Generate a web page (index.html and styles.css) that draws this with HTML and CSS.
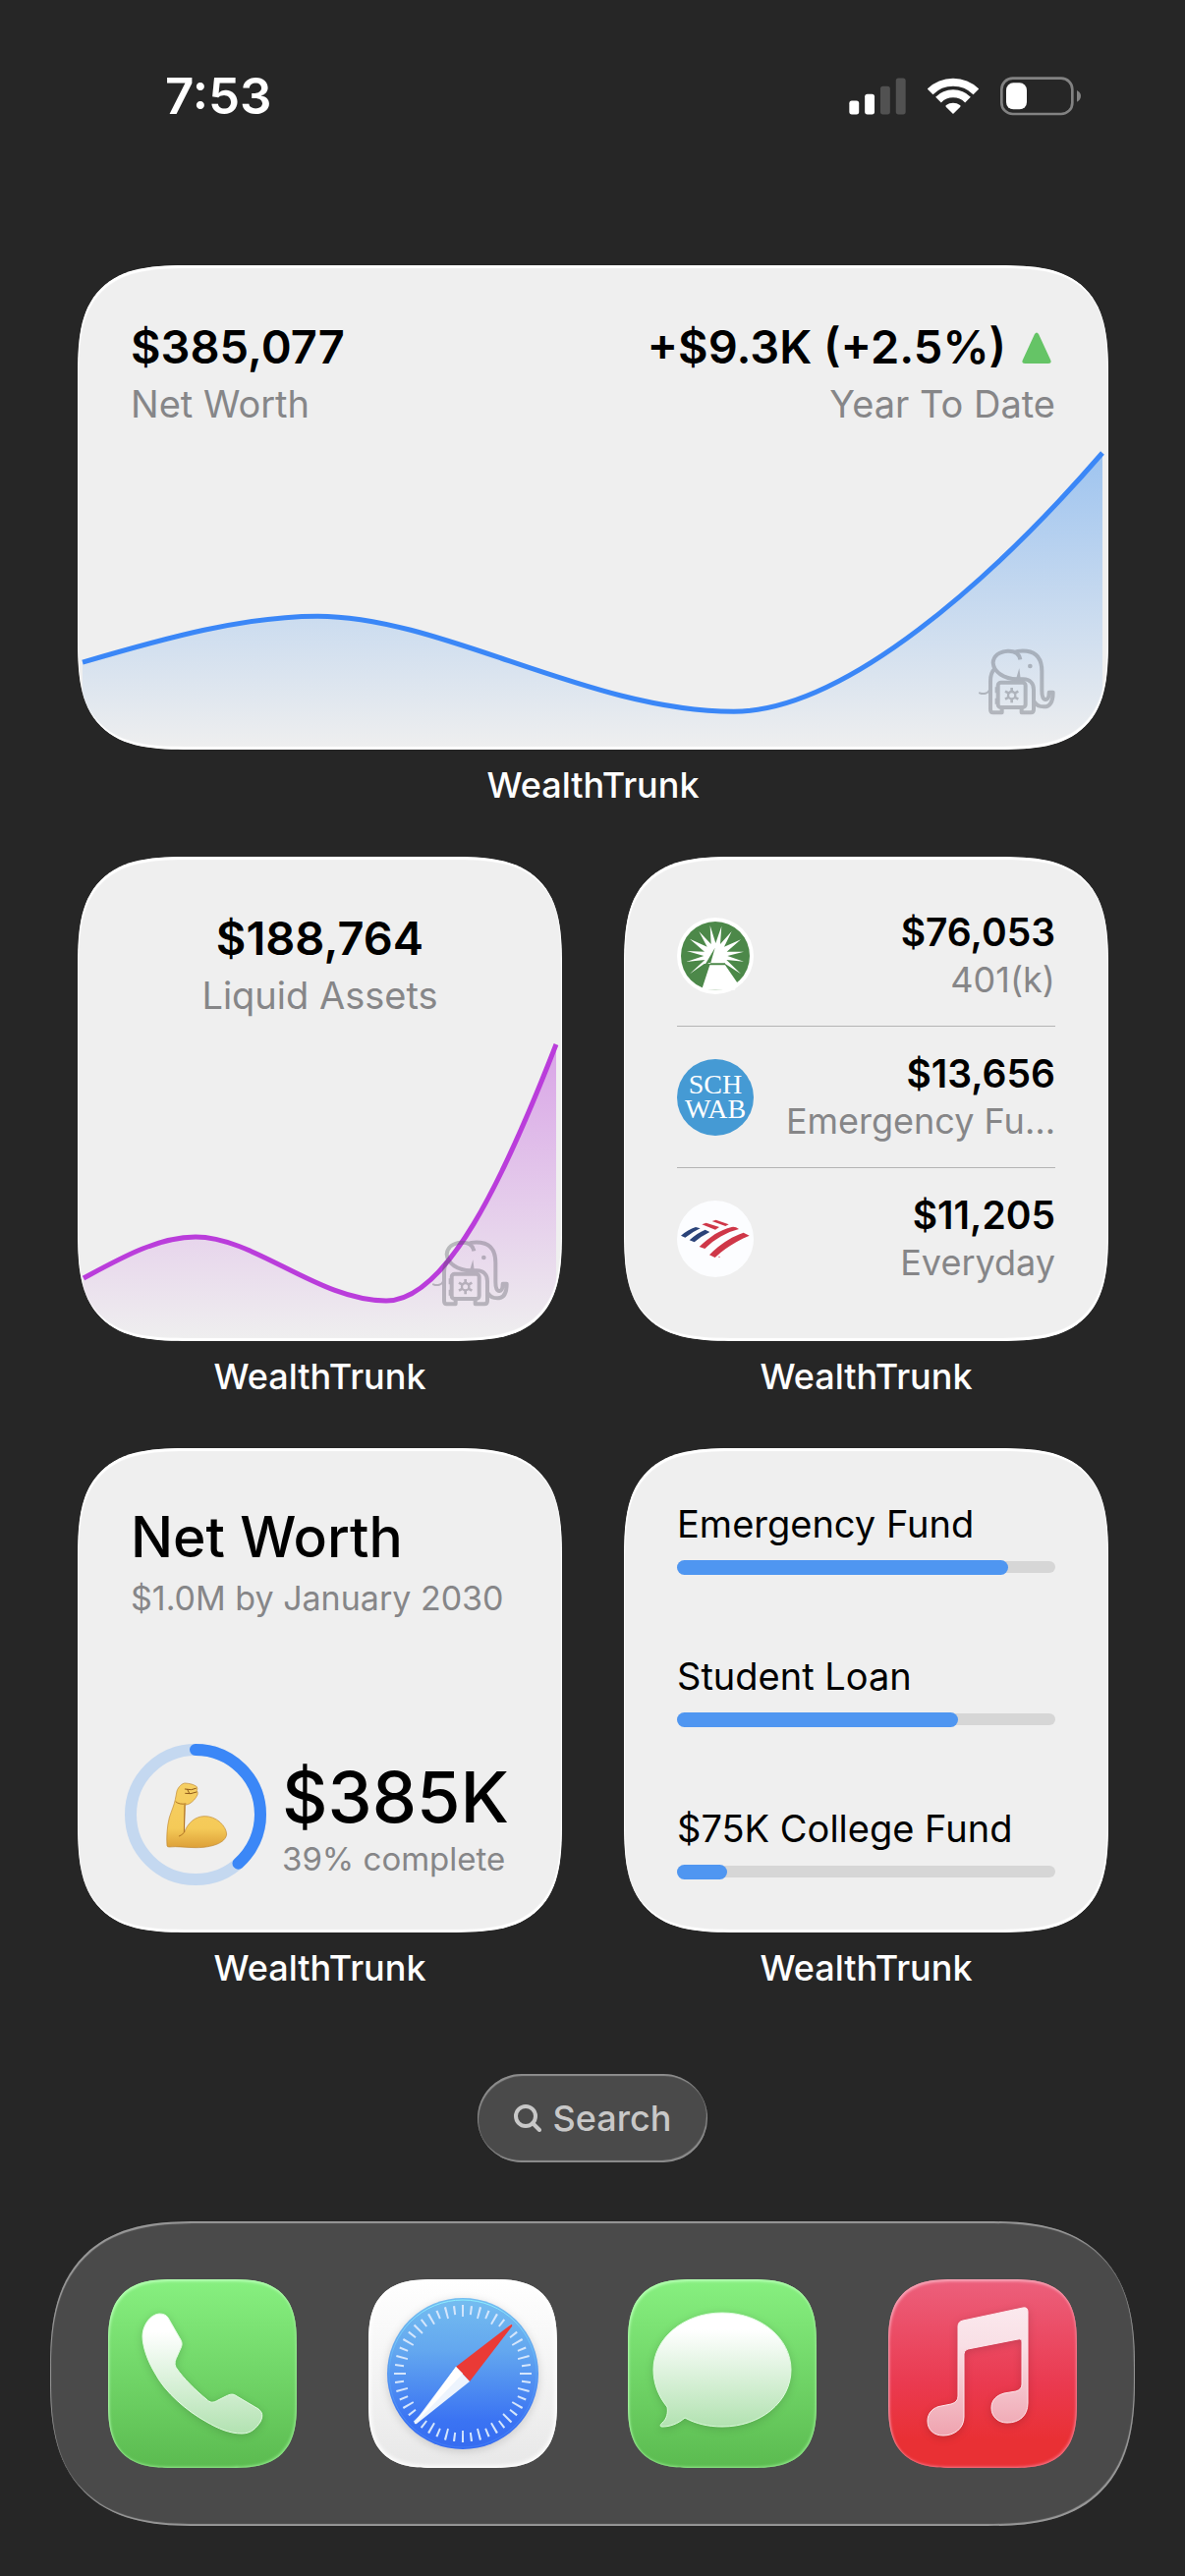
FILE: index.html
```html
<!DOCTYPE html>
<html lang="en">
<head>
    <meta charset="UTF-8">
    <meta name="viewport" content="width=device-width, initial-scale=1.0">
    <title>WealthTrunk Widgets</title>
    <link rel="stylesheet" href="styles.css">
</head>
<body>
    <!-- shared artwork -->
    <svg class="defs" width="0" height="0" aria-hidden="true">
        <symbol id="elephant" viewBox="76 58 240 208">
            <g fill="none" stroke="currentColor" stroke-width="12" stroke-linejoin="round">
                <path d="M206 94C203 77 189 67 168 68C141 69 124 84 123 104C125 133 158 153 196 154H215C236 154 247 167 247 186V246Q247 256 238 256H210V242"/>
                <path d="M186 72C200 66 214 67 226 68C259 72 272 97 272 130V188C272 207 276 217 284 216C292 215 294 206 294 194H306C306 222 296 238 278 238C263 238 253 231 249 222"/>
                <path d="M128 122C117 132 115 144 115 160V246Q115 256 123 256H150V242"/>
                <rect x="138" y="164" width="84" height="76" rx="9"/>
                <path stroke-width="6" stroke-linecap="round" d="M82 196C94 201 108 198 113 186"/>
                <path stroke-width="8" d="M133 178v18M133 212v18"/>
                <circle cx="180" cy="203" r="11" stroke-width="7"/>
                <path stroke-width="8" d="M180 192v-12M180 214v12M189 197l11-6M171 209l-11 6M171 197l-11-6M189 209l11 6"/>
            </g>
            <circle cx="236" cy="114" r="7" fill="currentColor"/>
            <path d="M203 120L194 150L207 152Z" fill="currentColor"/>
        </symbol>
    </svg>

    <header class="status-bar">
        <span class="time">7:53</span>
        <div class="status-icons">
            <svg width="58" height="38" viewBox="44 40 176 114" aria-label="Signal">
                <rect x="45" y="111" width="30" height="42" rx="8" fill="#fff"/>
                <rect x="93" y="90" width="30" height="63" rx="8" fill="#fff"/>
                <rect x="141" y="66" width="30" height="87" rx="8" fill="#515151"/>
                <rect x="189" y="41" width="30" height="112" rx="8" fill="#515151"/>
            </svg>
            <svg width="52" height="38" viewBox="284 40 156 114" aria-label="Wi-Fi">
                <path d="M292 83A99.500 99.500 0 0 1 432 83M317 108A63 63 0 0 1 407 108" fill="none" stroke="#fff" stroke-width="24"/>
                <path d="M362 151L340 129Q338 126 341 124A36 36 0 0 1 383 124Q386 126 384 129Z" fill="#fff"/>
            </svg>
            <svg width="82" height="40" viewBox="504 38 246 120" aria-label="Battery">
                <rect x="508" y="43" width="216" height="109" rx="34" fill="none" stroke="#828282" stroke-width="8"/>
                <rect x="522" y="57" width="63" height="81" rx="22" fill="#fff"/>
                <path d="M738 80C746 84 750 91 750 97C750 104 746 111 738 115Z" fill="#828282"/>
            </svg>
        </div>
    </header>

    <main class="widgets">
        <figure class="wide">
            <section class="widget widget-wide">
                <div class="totals">
                    <div>
                        <h2 class="amount">$385,077</h2>
                        <p class="label">Net Worth</p>
                    </div>
                    <div class="change">
                        <h2 class="amount">+$9.3K (+2.5%)
                            <svg class="up" width="30" height="32" viewBox="0 0 30 32"><path d="M13 2Q15-1 17 2L29 28Q31 32 27 32H3Q-1 32 1 28Z" fill="#65c466"/></svg>
                        </h2>
                        <p class="label">Year To Date</p>
                    </div>
                </div>
                <svg class="chart" viewBox="0 183 1048 310">
                    <defs>
                        <linearGradient id="blueFill" x1="0" y1="0" x2="0" y2="1">
                            <stop offset="0" stop-color="#3b8ff0" stop-opacity="0.45"/>
                            <stop offset="1" stop-color="#3b8ff0" stop-opacity="0"/>
                        </linearGradient>
                    </defs>
                    <path d="M5 404C90 379 170 357 244 357C370 357 520 454 667 454C780 454 930 320 1042 191V493H5Z" fill="url(#blueFill)"/>
                    <path d="M5 404C90 379 170 357 244 357C370 357 520 454 667 454C780 454 930 320 1042 191" fill="none" stroke="#3b87f7" stroke-width="5"/>
                </svg>
                <svg class="elephant"><use href="#elephant"/></svg>
            </section>
            <figcaption>WealthTrunk</figcaption>
        </figure>

        <figure>
            <section class="widget">
                <div class="totals totals-center">
                    <div>
                        <h2 class="amount">$188,764</h2>
                        <p class="label">Liquid Assets</p>
                    </div>
                </div>
                <svg class="chart" viewBox="0 183 493 310">
                    <defs>
                        <linearGradient id="purpleFill" x1="0" y1="0" x2="0" y2="1">
                            <stop offset="0" stop-color="#ba3ddb" stop-opacity="0.42"/>
                            <stop offset="1" stop-color="#ba3ddb" stop-opacity="0"/>
                        </linearGradient>
                    </defs>
                    <path d="M6 429C45 408 82 387 120 387C180 387 245 452 314 452C375 452 433 330 487 191V493H6Z" fill="url(#purpleFill)"/>
                    <path d="M6 429C45 408 82 387 120 387C180 387 245 452 314 452C375 452 433 330 487 191" fill="none" stroke="#ba3ddb" stroke-width="5"/>
                </svg>
                <svg class="elephant"><use href="#elephant"/></svg>
            </section>
            <figcaption>WealthTrunk</figcaption>
        </figure>

        <figure>
            <section class="widget">
                <ul class="accounts">
                    <li>
                        <svg class="bank" viewBox="27 41 234 234" aria-label="Fidelity">
                            <circle cx="144" cy="158" r="117" fill="#fff"/>
                            <circle cx="144" cy="158" r="105" fill="#4c8849"/>
                            <path fill="#fff" d="M66 213L112 170L55 176L109 158L57 143L111 145L66 106L119 130L94 83L131 122L128 65L145 119L163 67L159 122L194 83L171 130L222 108L179 145L231 145L181 158L231 175L178 170L222 213L174 182H110Z"/>
                            <path fill="#4c8849" d="M143 133L112 186H128ZM122 180H174V186H122Z"/>
                            <path fill="#fff" d="M127 186H174L211 240L204 262H96L104 256Z"/>
                        </svg>
                        <div>
                            <strong>$76,053</strong>
                            <span>401(k)</span>
                        </div>
                    </li>
                    <li>
                        <div class="bank schwab">SCH<br>WAB</div>
                        <div>
                            <strong>$13,656</strong>
                            <span>Emergency Fu…</span>
                        </div>
                    </li>
                    <li>
                        <svg class="bank" viewBox="27 903 234 234" aria-label="Bank of America">
                            <circle cx="144" cy="1020" r="117" fill="#fcfdff"/>
                            <g fill="#cf3748">
                                <path d="M95 1044C125 1015 158 992 194 984Q205 982 216 990C178 1000 142 1020 112 1050Z"/>
                                <path d="M126 1069C154 1040 190 1014 230 1001L248 1010C208 1026 174 1048 143 1077Z"/>
                                <path d="M103 976L116 971L156 984L144 992Z"/>
                                <path d="M134 966L146 962L185 976L175 981Z"/>
                                <circle cx="156" cy="1075" r="2"/>
                            </g>
                            <g fill="#2b4379">
                                <path d="M39 1010Q60 992 84 984L98 988Q74 999 52 1016Z"/>
                                <path d="M65 1024Q88 1002 113 992L127 999Q102 1011 80 1030Z"/>
                            </g>
                        </svg>
                        <div>
                            <strong>$11,205</strong>
                            <span>Everyday</span>
                        </div>
                    </li>
                </ul>
            </section>
            <figcaption>WealthTrunk</figcaption>
        </figure>

        <figure>
            <section class="widget goal">
                <div>
                    <h2 class="goal-title">Net Worth</h2>
                    <p class="goal-note">$1.0M by January 2030</p>
                </div>
                <div class="goal-progress">
                    <svg class="ring" viewBox="21 30 432 432" role="img" aria-label="39% complete">
                        <defs>
                            <linearGradient id="skin" x1="0" y1="0" x2="0" y2="1">
                                <stop offset="0" stop-color="#f6cf63"/>
                                <stop offset="0.700" stop-color="#f5ca58"/>
                                <stop offset="1" stop-color="#dda038"/>
                            </linearGradient>
                        </defs>
                        <g fill="none" stroke-width="36">
                            <circle cx="237" cy="246" r="198" stroke="#c4d8f0"/>
                            <circle cx="237" cy="246" r="198" stroke="#3b87f7" stroke-linecap="round" pathLength="1000" stroke-dasharray="385 1000" transform="rotate(-90 237 246)"/>
                        </g>
                        <path d="M150 341C148 316 150 281 157 255C164 233 172 216 175 200L180 174C184 162 196 150 205 150C219 151 233 154 241 161Q244 166 241 173Q245 178 243 185C238 197 228 207 218 213L205 217C205 245 202 272 203 300C213 271 237 251 264 251C301 250 331 281 332 306C329 333 286 347 238 347C208 347 181 342 157 345Q150 345 150 341Z" fill="url(#skin)" stroke="#c08a35" stroke-width="2"/>
                        <path d="M204 216L202 301Q195 309 187 312M177 207Q187 216 207 213" fill="none" stroke="#b07425" stroke-width="3" stroke-linecap="round"/>
                        <path d="M205 168L224 170L238 166M206 181L222 182L240 177M212 169L218 181" fill="none" stroke="#8f5a1a" stroke-width="3" stroke-linecap="round"/>
                    </svg>
                    <div>
                        <div class="goal-value">$385K</div>
                        <div class="goal-percent">39% complete</div>
                    </div>
                </div>
            </section>
            <figcaption>WealthTrunk</figcaption>
        </figure>

        <figure>
            <section class="widget funds">
                <div class="fund">
                    <p>Emergency Fund</p>
                    <div class="track"><div class="fill" style="width: 87.5%"></div></div>
                </div>
                <div class="fund">
                    <p>Student Loan</p>
                    <div class="track"><div class="fill" style="width: 74.3%"></div></div>
                </div>
                <div class="fund">
                    <p>$75K College Fund</p>
                    <div class="track"><div class="fill" style="width: 13.2%"></div></div>
                </div>
            </section>
            <figcaption>WealthTrunk</figcaption>
        </figure>
    </main>

    <button class="search" type="button">
        <svg width="28" height="28" viewBox="0 0 28 28" fill="none" stroke="#c8c8c8" stroke-linecap="round">
            <circle cx="12" cy="12" r="10" stroke-width="4"/>
            <path d="M19 19L26 26" stroke-width="4"/>
        </svg>
        Search
    </button>

    <nav class="dock">
        <a class="app app-green" href="#" aria-label="Phone">
            <svg viewBox="0 0 192 192">
                <defs>
                    <linearGradient id="glass" x1="0" y1="0" x2="0" y2="1">
                        <stop offset="0.150" stop-color="#fff"/>
                        <stop offset="1" stop-color="#b2e2b1"/>
                    </linearGradient>
                </defs>
                <path d="M52 35C42 36 35 48 35 58C35 68 40 83 48 96C58 115 80 134 100 145C112 152 124 157 136 157C146 157 151 151 155 145C158 139 157 135 153 132L131 119C127 116 124 117 120 119L112 123C107 126 104 126 100 122C90 114 76 100 70 91C67 87 68 83 70 79L74 70C76 66 75 63 73 60L61 39C59 36 56 35 52 35Z" fill="url(#glass)" stroke="#e4fbe4" stroke-width="1"/>
            </svg>
        </a>
        <a class="app app-white" href="#" aria-label="Safari">
            <svg viewBox="0 0 192 192">
                <defs>
                    <linearGradient id="compass" x1="0" y1="0" x2="0" y2="1">
                        <stop offset="0" stop-color="#75bdf0"/>
                        <stop offset="0.350" stop-color="#63a7ef"/>
                        <stop offset="0.800" stop-color="#3b74f3"/>
                        <stop offset="1" stop-color="#356bf0"/>
                    </linearGradient>
                    <linearGradient id="rim" x1="0" y1="0" x2="0" y2="1">
                        <stop offset="0" stop-color="#8df0ff"/>
                        <stop offset="0.500" stop-color="#5aa3f5"/>
                        <stop offset="1" stop-color="#3f7af5"/>
                    </linearGradient>
                </defs>
                <circle cx="96" cy="96" r="77" fill="url(#compass)"/>
                <circle cx="96" cy="96" r="75" fill="none" stroke="url(#rim)" stroke-width="1"/>
                <g fill="none" stroke="#d5e6fc">
                    <circle cx="96" cy="96" r="64" stroke-width="12" pathLength="2400" stroke-dasharray="12 88" stroke-dashoffset="6"/>
                    <circle cx="96" cy="96" r="65" stroke-width="9" pathLength="2400" stroke-dasharray="12 88" stroke-dashoffset="56"/>
                </g>
                <path d="M145 46Q147 46 146 48L103 104L89 89Z" fill="#ea3a36"/>
                <path d="M89 89L103 104L49 147Q46 148 47 145Z" fill="#edf4fd"/>
                <path d="M89 89L96 96L48 146Z" fill="#fff"/>
            </svg>
        </a>
        <a class="app app-green" href="#" aria-label="Messages">
            <svg viewBox="0 0 192 192">
                <path d="M96 34C135 34 166 60 166 92C166 125 135 150 96 150C82 150 69 147 58 141C51 147 43 150 35 150C32 150 33 148 35 146C40 142 41 135 40 130C31 119 26 106 26 92C26 60 57 34 96 34Z" fill="url(#glass)" stroke="#dffbdf" stroke-width="1"/>
            </svg>
        </a>
        <a class="app app-red" href="#" aria-label="Music">
            <svg viewBox="0 0 192 192">
                <defs>
                    <linearGradient id="note" x1="0" y1="0" x2="0" y2="1">
                        <stop offset="0" stop-color="#fbe9ee"/>
                        <stop offset="0.300" stop-color="#f9dfe5"/>
                        <stop offset="1" stop-color="#efa3af"/>
                    </linearGradient>
                </defs>
                <path d="M71 48Q71 43 76 42L137 29Q142 28 142 33V126C142 139 133 146 121 146C112 146 105 140 105 131C105 122 111 118 118 116L130 114Q136 112 136 107V64Q136 60 132 61L81 71Q77 72 77 76V140C77 152 67 159 56 159C46 159 40 153 40 144C40 136 46 130 54 129L64 127Q71 125 71 119Z" fill="url(#note)" stroke="#fde8ed" stroke-width="1"/>
            </svg>
        </a>
    </nav>
</body>
</html>
```

FILE: styles.css
```css
* {
    box-sizing: border-box;
}

body {
    margin: 0;
    min-height: 100vh;
    display: flex;
    flex-direction: column;
    background-color: #262626;
    color: white;
    font-family: Inter, "Liberation Sans", sans-serif;
}

h2,
p,
ul,
figure {
    margin: 0;
    padding: 0;
    font-weight: 400;
}

.defs {
    position: absolute;
}

/* Status bar */
.status-bar {
    display: flex;
    justify-content: space-between;
    align-items: center;
    padding: 68px 106px 142px 168px;
}

.time {
    font-size: 51px;
    line-height: 60px;
    font-weight: 600;
}

.status-icons {
    display: flex;
    align-items: center;
    gap: 22px;
}

/* Widgets */
.widgets {
    display: grid;
    grid-template-columns: 1fr 1fr;
    gap: 51px 63px;
    padding: 0 78px 0 79px;
}

.wide {
    grid-column: span 2;
}

figcaption {
    margin-top: 14px;
    text-align: center;
    font-size: 36px;
    line-height: 44px;
    font-weight: 500;
}

.widget {
    position: relative;
    display: flex;
    flex-direction: column;
    aspect-ratio: 1;
    border-radius: 82px;
    overflow: hidden;
    background-color: #efefef;
    color: black;
}

.widget-wide {
    aspect-ratio: 1049 / 493;
}

/* light edge of the glass */
.widget::after {
    content: "";
    position: absolute;
    inset: 0;
    border-radius: 82px;
    box-shadow: inset 1px 3px 1px white, inset -1px -3px 1px white;
    pointer-events: none;
}

.totals {
    display: flex;
    justify-content: space-between;
    padding: 55px 54px 0;
}

.totals-center {
    justify-content: center;
    text-align: center;
}

.change {
    text-align: right;
}

.amount {
    font-size: 47px;
    line-height: 56px;
    font-weight: 600;
}

.up {
    margin-left: 4px;
    margin-right: 4px;
}

.label {
    font-size: 38px;
    line-height: 60px;
    color: #868688;
}

.chart {
    display: block;
    width: 100%;
    margin-top: auto;
}

.elephant {
    position: absolute;
    right: 53px;
    bottom: 34px;
    width: 80px;
    height: 70px;
    color: #55565f;
    opacity: 0.35;
}

/* Accounts */
.accounts {
    list-style: none;
    padding: 29px 54px 0;
}

.accounts li {
    display: flex;
    justify-content: space-between;
    align-items: center;
    height: 144px;
    border-bottom: 1px solid #b4b4b4;
    text-align: right;
}

.accounts li:last-child {
    border-bottom: none;
}

.accounts strong,
.accounts span {
    display: block;
    line-height: 48px;
}

.accounts strong {
    font-size: 39px;
    font-weight: 600;
}

.accounts span {
    font-size: 36px;
    color: #868688;
}

.bank {
    width: 78px;
    height: 78px;
    flex: none;
}

.schwab {
    padding-top: 13px;
    border-radius: 50%;
    background-color: #459ad4;
    color: white;
    font-family: "Liberation Serif", serif;
    font-size: 28px;
    line-height: 25px;
    text-align: center;
}

/* Net worth goal */
.goal {
    justify-content: space-between;
    padding: 55px 54px 48px;
}

.goal-title {
    font-size: 57px;
    line-height: 72px;
    font-weight: 500;
}

.goal-note {
    font-size: 34px;
    line-height: 52px;
    color: #868688;
    white-space: nowrap;
}

.goal-progress {
    display: flex;
    justify-content: space-between;
    align-items: flex-end;
    margin-left: -6px;
    white-space: nowrap;
}

.ring {
    width: 144px;
    height: 144px;
    flex: none;
}

.goal-value {
    font-size: 72px;
    line-height: 72px;
    font-weight: 500;
}

.goal-percent {
    font-size: 33px;
    line-height: 54px;
    color: #868688;
}

/* Funds */
.funds {
    justify-content: space-between;
    padding: 49px 54px 54px;
}

.fund p {
    font-size: 38px;
    line-height: 56px;
}

.track {
    display: flex;
    align-items: center;
    height: 12px;
    margin: 10px 0 2px;
    border-radius: 6px;
    background-color: #d6d6d6;
}

.fill {
    height: 15px;
    border-radius: 8px;
    background-color: #4f96f1;
}

/* Search */
.search {
    display: flex;
    align-items: center;
    align-self: center;
    gap: 12px;
    height: 90px;
    margin: 86px 0 60px;
    padding: 0 37px;
    border: none;
    border-radius: 45px;
    background-color: #4a4a4a;
    box-shadow: inset 1px 2px 1px #8e8e8e, inset -1px -2px 1px #8e8e8e;
    color: #c8c8c8;
    font-family: inherit;
    font-size: 36px;
    font-weight: 500;
}

/* Dock */
.dock {
    display: flex;
    justify-content: space-between;
    margin: 0 51px;
    padding: 59px;
    border-radius: 115px;
    background-color: #4a4a4a;
    box-shadow: inset 1px 2px 1px #9a9a9a, inset -1px -2px 1px #9a9a9a;
}

.app {
    width: 192px;
    height: 192px;
    border-radius: 50px;
}

.app svg {
    display: block;
    filter: drop-shadow(0 2px 4px rgba(0, 0, 0, 0.15));
}

.app-green {
    background: linear-gradient(#87f080, #5bbb50);
    box-shadow: inset 1px 2px 3px #b6ffb4, inset -1px -1px 3px #93ea8d;
}

.app-white {
    background: linear-gradient(#ffffff, #e8e8e8);
    box-shadow: inset 0 0 4px 2px white;
}

.app-red {
    background: linear-gradient(#ec607c, #ea3a50 55%, #e93034 85%);
    box-shadow: inset 1px 2px 3px #f9a9bb, inset -1px -1px 3px #f4798c;
}

/* smoother corners where the browser can draw them */
@supports (corner-shape: squircle) {
    .widget,
    .widget::after {
        border-radius: 116px;
        corner-shape: superellipse(1.6);
    }

    .dock {
        border-radius: 150px;
        corner-shape: superellipse(1.4);
    }

    .app {
        border-radius: 68px;
        corner-shape: superellipse(1.5);
    }
}
```
